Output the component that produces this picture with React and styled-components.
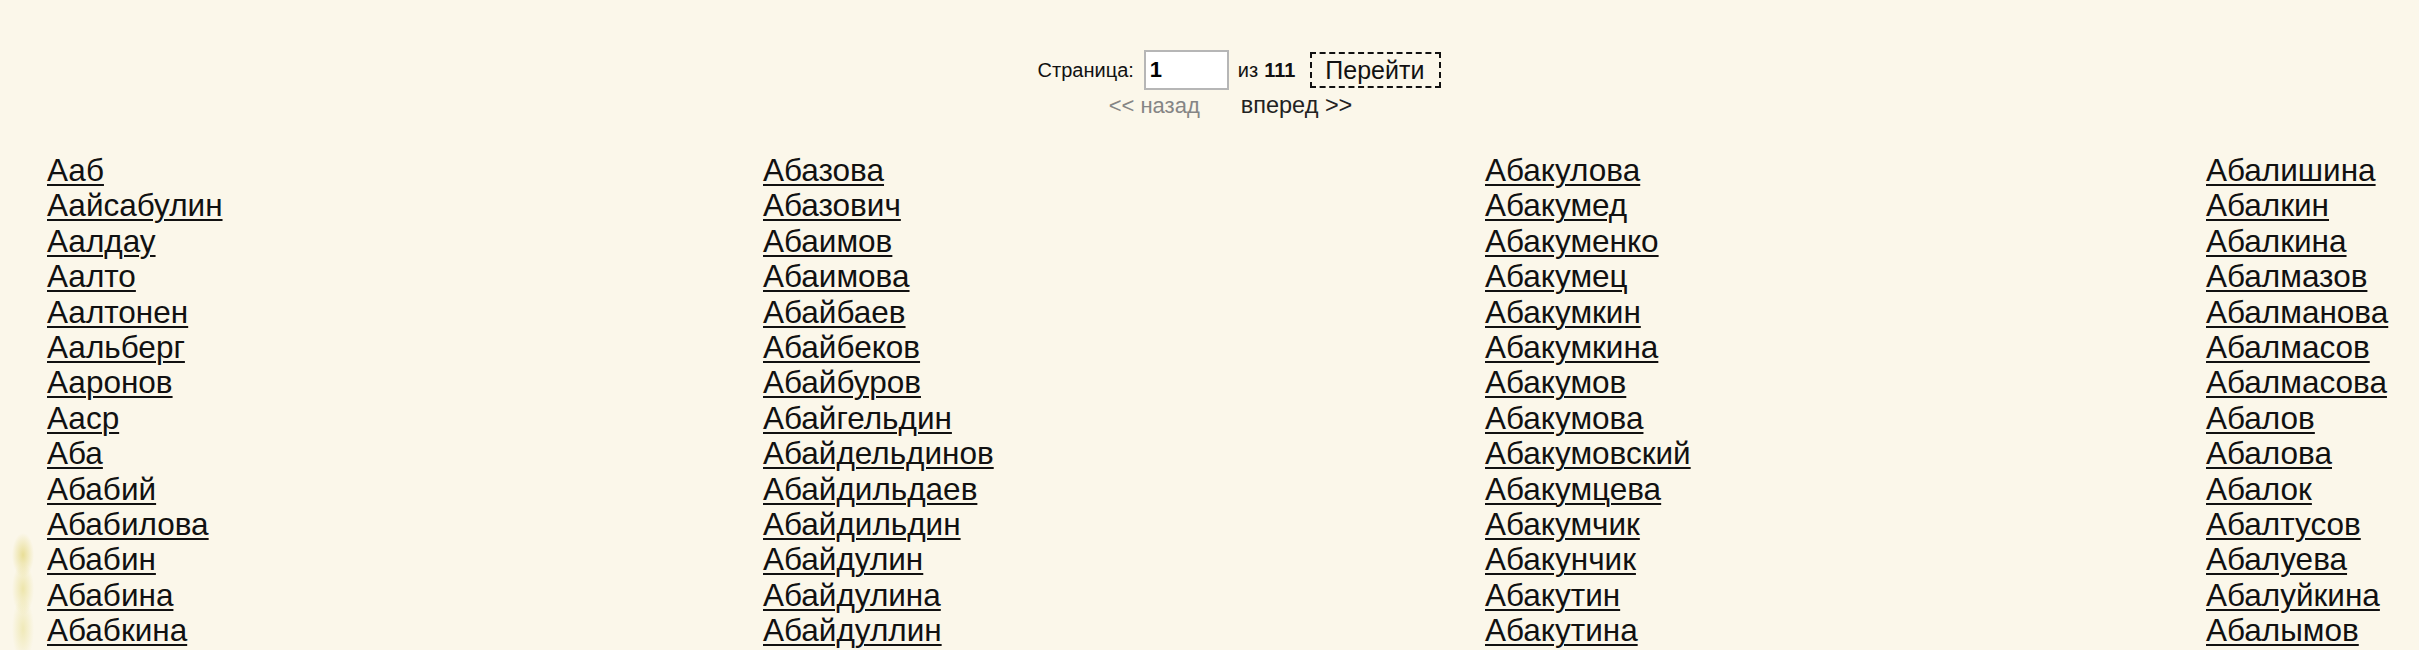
import React from "react";
import styled, { createGlobalStyle } from "styled-components";

const GlobalStyle = createGlobalStyle`
  html, body {
    margin: 0;
    padding: 0;
  }
  body {
    font-family: "Liberation Sans", Arial, sans-serif;
    color: #111;
    min-height: 650px;
    background:
      radial-gradient(ellipse 11px 22px at 50% 50%, rgba(228, 216, 130, 0.8), rgba(228, 216, 130, 0) 100%) no-repeat 11px 532px / 24px 46px,
      radial-gradient(ellipse 11px 26px at 50% 50%, rgba(232, 222, 145, 0.7), rgba(232, 222, 145, 0) 100%) no-repeat 11px 562px / 24px 54px,
      radial-gradient(ellipse 11px 32px at 50% 50%, rgba(234, 226, 158, 0.65), rgba(234, 226, 158, 0) 100%) no-repeat 11px 596px / 24px 66px,
      #fbf7ea;
  }
`;

const Page = styled.div`
  padding-top: 50px;
`;

const Pager = styled.div`
  display: flex;
  flex-direction: column;
  align-items: center;
  gap: 4px;
`;

const PagerRow = styled.div`
  display: flex;
  align-items: center;
  padding-left: ${(p) => p.$shift}px;
  font-size: 20px;
  line-height: 23px;
  color: #111;
`;

const Label = styled.span`
  font-size: 20px;
`;

const PageInput = styled.input`
  box-sizing: border-box;
  width: 85px;
  height: 40px;
  margin: 0 9px 0 10px;
  padding: 0 4px;
  border: 2px solid #b6b6b6;
  background: #fff;
  font-family: "Liberation Sans", Arial, sans-serif;
  font-weight: bold;
  font-size: 22px;
  color: #000;
  outline: none;
`;

const Total = styled.b`
  font-weight: bold;
  margin-left: 6px;
`;

const GoButton = styled.button`
  box-sizing: border-box;
  height: 36px;
  margin-left: 15px;
  padding: 0 15px 0 13px;
  border: 2px dashed #111;
  background: transparent;
  font-family: "Liberation Sans", Arial, sans-serif;
  font-size: 25px;
  line-height: 30px;
  color: #111;
  cursor: pointer;
`;

const NavLink = styled.a`
  font-size: ${(p) => (p.$disabled ? 22 : 23.5)}px;
  text-decoration: none;
  color: ${(p) => (p.$disabled ? "#858585" : "#222")};
  margin-left: ${(p) => p.$gap || 0}px;
`;

const Columns = styled.div`
  display: grid;
  grid-template-columns: 716px 722px 721px 1fr;
  padding-left: 47px;
  margin-top: 36px;
`;

const Column = styled.ul`
  list-style: none;
  margin: 0;
  padding: 0;
`;

const Name = styled.li`
  font-size: 31.5px;
  line-height: 35.4px;
  white-space: nowrap;
`;

const NameLink = styled.a`
  color: #111;
  text-decoration: underline;
  text-decoration-thickness: 2px;
  text-underline-offset: 3px;
`;

const columns = [
  ["Ааб", "Аайсабулин", "Аалдау", "Аалто", "Аалтонен", "Аальберг", "Ааронов", "Аасp", "Аба", "Абабий", "Абабилова", "Абабин", "Абабина", "Абабкина"],
  ["Абазова", "Абазович", "Абаимов", "Абаимова", "Абайбаев", "Абайбеков", "Абайбуров", "Абайгельдин", "Абайдельдинов", "Абайдильдаев", "Абайдильдин", "Абайдулин", "Абайдулина", "Абайдуллин"],
  ["Абакулова", "Абакумед", "Абакуменко", "Абакумец", "Абакумкин", "Абакумкина", "Абакумов", "Абакумова", "Абакумовский", "Абакумцева", "Абакумчик", "Абакунчик", "Абакутин", "Абакутина"],
  ["Абалишина", "Абалкин", "Абалкина", "Абалмазов", "Абалманова", "Абалмасов", "Абалмасова", "Абалов", "Абалова", "Абалок", "Абалтусов", "Абалуева", "Абалуйкина", "Абалымов"],
];

export default function App() {
  return (
    <>
      <GlobalStyle />
      <Page>
        <Pager>
          <PagerRow $shift={60}>
            <Label>Страница:</Label>
            <PageInput defaultValue="1" />
            <Label>
              из<Total>111</Total>
            </Label>
            <GoButton>Перейти</GoButton>
          </PagerRow>
          <PagerRow $shift={42}>
            <NavLink $disabled>&lt;&lt; назад</NavLink>
            <NavLink href="#" $gap={41}>
              вперед &gt;&gt;
            </NavLink>
          </PagerRow>
        </Pager>
        <Columns>
          {columns.map((col, i) => (
            <Column key={i}>
              {col.map((n) => (
                <Name key={n}>
                  <NameLink href="#">{n.replace("p", "р")}</NameLink>
                </Name>
              ))}
            </Column>
          ))}
        </Columns>
      </Page>
    </>
  );
}
